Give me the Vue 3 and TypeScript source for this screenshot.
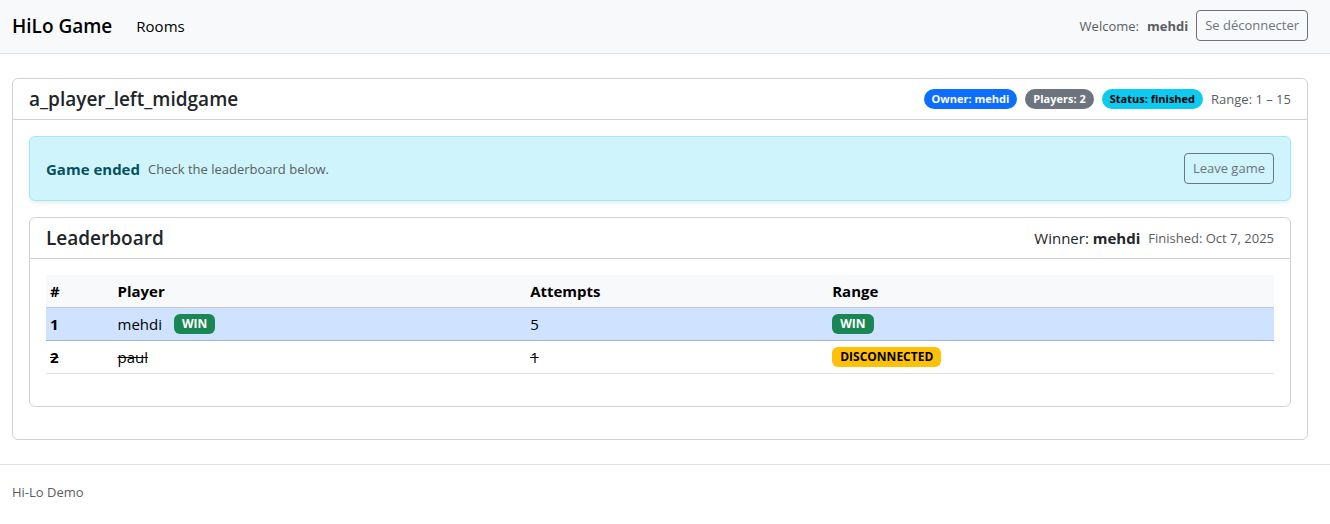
<script setup lang="ts">
interface Entry {
  rank: number
  player: string
  attempts: number
  winner: boolean
  disconnected: boolean
}

const user = 'mehdi'
const room = {
  name: 'a_player_left_midgame',
  owner: 'mehdi',
  players: 2,
  status: 'finished',
  min: 1,
  max: 15,
  winner: 'mehdi',
  finished: 'Oct 7, 2025',
}

const entries: Entry[] = [
  { rank: 1, player: 'mehdi', attempts: 5, winner: true, disconnected: false },
  { rank: 2, player: 'paul', attempts: 1, winner: false, disconnected: true },
]
</script>

<template>
  <div class="app">
    <header class="topbar">
      <nav class="nav">
        <a class="brand" href="#">HiLo Game</a>
        <a class="nav-link" href="#rooms">Rooms</a>
      </nav>
      <div class="session">
        <span class="small muted">Welcome:</span>
        <strong class="small muted">{{ user }}</strong>
        <button type="button" class="btn">Se déconnecter</button>
      </div>
    </header>

    <main class="content">
      <section class="card">
        <div class="card-header">
          <h1 class="title">{{ room.name }}</h1>
          <div class="meta">
            <span class="badge pill primary">Owner: {{ room.owner }}</span>
            <span class="badge pill secondary">Players: {{ room.players }}</span>
            <span class="badge pill info">Status: {{ room.status }}</span>
            <span class="small muted">Range: {{ room.min }} – {{ room.max }}</span>
          </div>
        </div>

        <div class="card-body">
          <div class="alert" role="status">
            <div class="meta">
              <strong>Game ended</strong>
              <span class="small muted">Check the leaderboard below.</span>
            </div>
            <button type="button" class="btn">Leave game</button>
          </div>

          <section class="card">
            <div class="card-header">
              <h2 class="title">Leaderboard</h2>
              <div class="meta">
                <span>Winner: <strong>{{ room.winner }}</strong></span>
                <span class="small muted">Finished: {{ room.finished }}</span>
              </div>
            </div>
            <div class="card-body">
              <table class="table">
                <colgroup>
                  <col class="col-rank" />
                  <col class="col-player" />
                  <col class="col-attempts" />
                  <col />
                </colgroup>
                <thead>
                  <tr>
                    <th scope="col">#</th>
                    <th scope="col">Player</th>
                    <th scope="col">Attempts</th>
                    <th scope="col">Range</th>
                  </tr>
                </thead>
                <tbody>
                  <tr
                    v-for="entry in entries"
                    :key="entry.rank"
                    :class="{ winner: entry.winner, left: entry.disconnected }"
                  >
                    <th scope="row"><span class="value">{{ entry.rank }}</span></th>
                    <td>
                      <div class="player">
                        <span class="value">{{ entry.player }}</span>
                        <span v-if="entry.winner" class="badge success">WIN</span>
                      </div>
                    </td>
                    <td><span class="value">{{ entry.attempts }}</span></td>
                    <td>
                      <div class="player">
                        <span v-if="entry.winner" class="badge success">WIN</span>
                        <span v-else-if="entry.disconnected" class="badge warning">DISCONNECTED</span>
                      </div>
                    </td>
                  </tr>
                </tbody>
              </table>
            </div>
          </section>
        </div>
      </section>
    </main>

    <footer class="footer small muted">Hi-Lo Demo</footer>
  </div>
</template>

<style>
body {
  margin: 0;
  background: #fff;
}
</style>

<style scoped>
.app {
  font-family: "Segoe UI", "Open Sans", "Noto Sans", sans-serif;
  font-size: 15px;
  line-height: 24px;
  color: #212529;
}

.app * {
  box-sizing: border-box;
}

.topbar {
  display: flex;
  align-items: center;
  justify-content: space-between;
  padding: 10px 22px 12px 12px;
  background: #f8f9fa;
  border-bottom: 1px solid #dee2e6;
}

.nav {
  display: flex;
  align-items: center;
  gap: 24px;
}

.brand,
.nav-link {
  color: #000;
  text-decoration: none;
}

.brand {
  font-size: 19px;
  font-weight: 600;
}

.session,
.meta {
  display: flex;
  align-items: center;
  gap: 8px;
}

.small {
  font-size: 13px;
}

.muted {
  color: #585e63;
}

strong {
  font-weight: 700;
}

.btn {
  padding: 4px 8px;
  border: 1px solid #6c757d;
  border-radius: 4px;
  background: transparent;
  color: #6c757d;
  font-family: inherit;
  font-size: 13px;
  line-height: 21px;
  cursor: pointer;
}

.content {
  padding: 24px 22px 24px 12px;
}

.card {
  margin: 0;
  border: 1px solid #d0d1d2;
  border-radius: 6px;
  background: #fff;
}

.card-header {
  display: flex;
  align-items: center;
  justify-content: space-between;
  padding: 8px 16px;
  border-bottom: 1px solid #d0d1d2;
}

.title {
  margin: 0;
  font-size: 19px;
  font-weight: 600;
  line-height: 24px;
}

.card-body {
  padding: 16px 16px 32px;
}

.alert {
  display: flex;
  align-items: center;
  justify-content: space-between;
  margin-bottom: 16px;
  padding: 16px;
  border: 1px solid #9eeaf9;
  border-radius: 6px;
  background: #cff4fc;
  box-shadow: 0 2px 4px rgba(0, 0, 0, 0.08);
}

.alert strong {
  color: #055160;
}

.badge {
  padding: 4px 8px;
  border-radius: 6px;
  font-size: 12px;
  font-weight: 700;
  line-height: 12px;
  color: #fff;
  white-space: nowrap;
}

.pill {
  border-radius: 10px;
  font-size: 11px;
}

.primary {
  background: #0d6efd;
}

.secondary {
  background: #6c757d;
}

.info {
  background: #0dcaf0;
  color: #000;
}

.success {
  background: #198754;
}

.warning {
  background: #ffc107;
  color: #000;
}

.table {
  width: 100%;
  table-layout: fixed;
  border-collapse: separate;
  border-spacing: 0;
  color: #000;
}

.col-rank {
  width: 5.5%;
}

.col-player {
  width: 33.6%;
}

.col-attempts {
  width: 24.6%;
}

.table th,
.table td {
  padding: 4px;
  border-bottom: 1px solid #dee2e6;
  text-align: left;
  vertical-align: middle;
}

.table thead th {
  background: #f8f9fa;
  border-bottom-color: #c6c7c8;
}

.table .winner th,
.table .winner td {
  background: #cfe2ff;
  border-bottom-color: #a6b5cc;
}

.left .value {
  text-decoration: line-through;
}

.player {
  display: flex;
  align-items: center;
  gap: 12px;
}

.footer {
  padding: 15px 12px;
  border-top: 1px solid #dee2e6;
}
</style>
